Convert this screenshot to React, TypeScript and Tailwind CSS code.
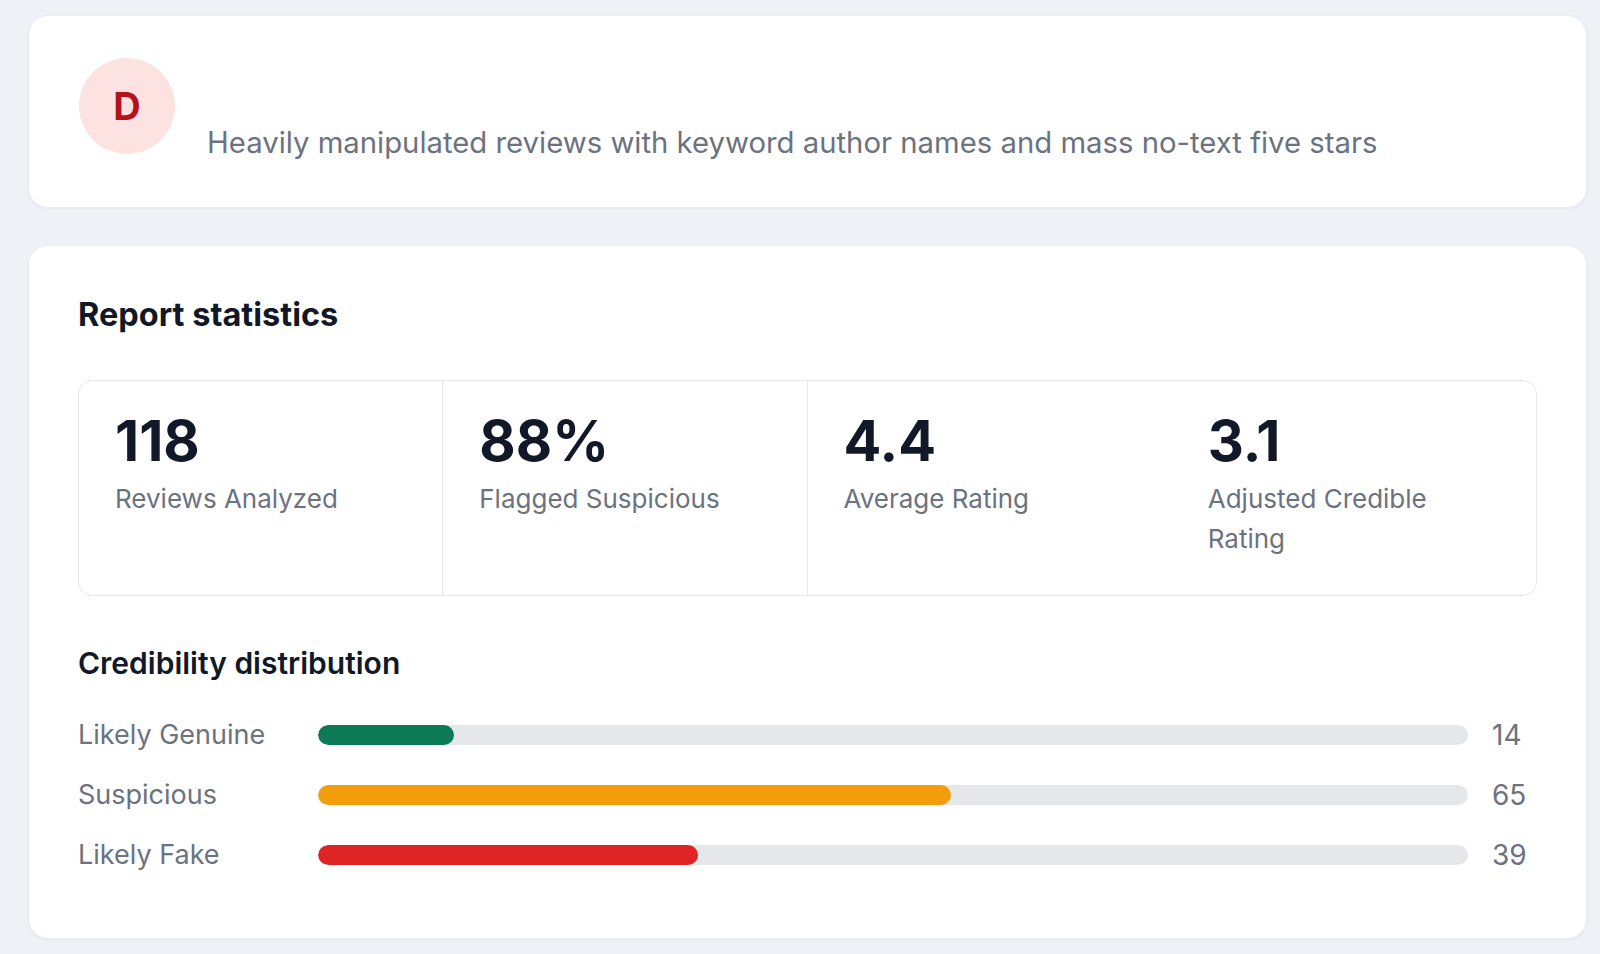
const stats = [
  { value: "118", label: "Reviews Analyzed", divider: true },
  { value: "88%", label: "Flagged Suspicious", divider: true },
  { value: "4.4", label: "Average Rating", divider: false },
  { value: "3.1", label: "Adjusted Credible Rating", divider: false },
];

const total = 118;

const distribution = [
  { label: "Likely Genuine", count: 14, color: "bg-[#0b7a55]" },
  { label: "Suspicious", count: 65, color: "bg-[#f29d0c]" },
  { label: "Likely Fake", count: 39, color: "bg-[#de2424]" },
];

export default function App() {
  return (
    <div
      className="min-h-screen bg-[#eef1f6] pl-[28px] pr-[13px] pt-[15px] pb-[15px] flex flex-col gap-[37px]"
      style={{ fontFamily: "Inter, 'Noto Sans', sans-serif" }}
    >
      {/* Grade summary */}
      <div className="rounded-[20px] bg-white border border-[#e9edf3] shadow-[0_1px_3px_rgba(15,23,42,0.05)] px-[50px] pt-[42px] pb-[44px] flex items-start gap-8">
        <div className="w-24 h-24 shrink-0 rounded-full bg-[#fde2e2] flex items-center justify-center">
          <span className="text-[38px] font-bold leading-none text-[#b4121c]">D</span>
        </div>
        <p className="mt-[65px] text-[29.3px] leading-[40px] text-[#6b7280]">
          Heavily manipulated reviews with keyword author names and mass no-text five stars
        </p>
      </div>

      {/* Report statistics */}
      <div className="rounded-[20px] bg-white border border-[#e9edf3] shadow-[0_1px_3px_rgba(15,23,42,0.05)] px-[49px] pt-[51px] pb-[63px]">
        <h2 className="text-[32.5px] leading-[36px] font-bold text-[#111827]">Report statistics</h2>

        <div className="mt-[47px] grid grid-cols-4 rounded-[14px] border border-[#e5e7eb]">
          {stats.map((s) => (
            <div
              key={s.label}
              className={s.divider ? "px-9 pt-8 pb-9 border-r border-[#e5e7eb]" : "px-9 pt-8 pb-9"}
            >
              <div className="text-[56px] leading-none font-bold text-[#111827]">{s.value}</div>
              <div className="mt-2.5 text-[26px] leading-[40px] text-[#6b7280]">{s.label}</div>
            </div>
          ))}
        </div>

        <h3 className="mt-[50px] text-[30px] leading-[34px] font-semibold text-[#111827]">
          Credibility distribution
        </h3>

        <div className="mt-[35px] flex flex-col gap-5">
          {distribution.map((d) => (
            <div key={d.label} className="flex items-center h-10">
              <span className="w-[240px] shrink-0 text-[27px] text-[#6b7280]">{d.label}</span>
              <div className="flex-1 h-5 rounded-full bg-[#e5e7eb] overflow-hidden">
                <div
                  className={`h-full rounded-full ${d.color}`}
                  style={{ width: `${(d.count / total) * 100}%` }}
                />
              </div>
              <span className="w-[69px] shrink-0 pl-[24px] text-[28px] text-[#6b7280]">{d.count}</span>
            </div>
          ))}
        </div>
      </div>
    </div>
  );
}
